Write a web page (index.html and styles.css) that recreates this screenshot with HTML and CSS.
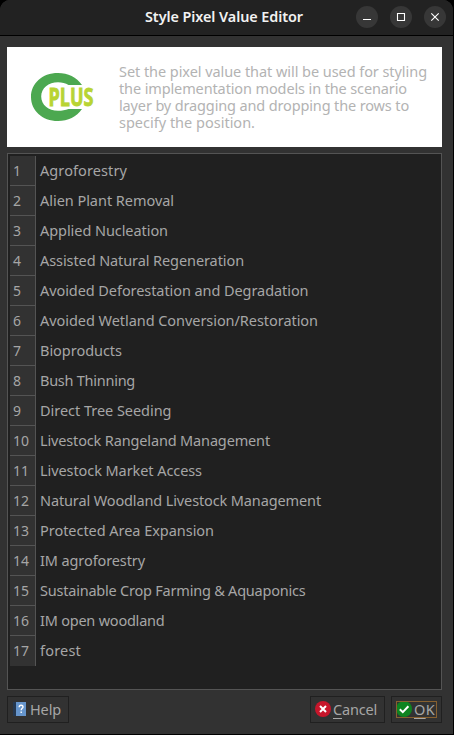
FILE: index.html
```
<!DOCTYPE html>
<html lang="en">
<head>
<meta charset="utf-8">
<title>Style Pixel Value Editor</title>
<link rel="stylesheet" href="styles.css">
</head>
<body>
<div class="window">
  <header class="titlebar">
    <h1 data-width="158">Style Pixel Value Editor</h1>
    <div class="controls">
      <button aria-label="Minimize"><svg width="22" height="22"><path d="M7 13.5h8"/></svg></button>
      <button aria-label="Maximize"><svg width="22" height="22"><path d="M7.5 7.5h7v7h-7z"/></svg></button>
      <button aria-label="Close"><svg width="22" height="22"><path d="M7.300 7.300l7.400 7.400M14.700 7.300l-7.400 7.400"/></svg></button>
    </div>
  </header>
  <main>
    <section class="banner">
      <svg class="logo" width="66" height="50" viewBox="0 0 66 50" role="img" aria-label="CPLUS">
        <path fill="#4ca850" d="M52 13C46.500 5 38 1 28 1 12 1 1 11.500 1 25s11 24 27 24c10 0 18.500-4 24-12H38.500C35.500 38.200 32 38.800 28 38.800 18.500 38.800 11.200 33 11.200 24.500S18.500 10.200 28 10.200c4 0 7.500 1 10.500 2.800z"/>
        <text x="18.500" y="33.500" textLength="45" lengthAdjust="spacingAndGlyphs">PLUS</text>
      </svg>
      <p>
        <span data-width="308">Set the pixel value that will be used for styling</span>
        <span data-width="288">the implementation models in the scenario</span>
        <span data-width="290">layer by dragging and dropping the rows to</span>
        <span data-width="136">specify the position.</span>
      </p>
    </section>
    <ol class="list">
      <li><b>1</b><span data-width="87">Agroforestry</span></li>
      <li><b>2</b><span data-width="134">Alien Plant Removal</span></li>
      <li><b>3</b><span data-width="128">Applied Nucleation</span></li>
      <li><b>4</b><span data-width="204">Assisted Natural Regeneration</span></li>
      <li><b>5</b><span data-width="268.500">Avoided Deforestation and Degradation</span></li>
      <li><b>6</b><span data-width="278">Avoided Wetland Conversion/Restoration</span></li>
      <li><b>7</b><span data-width="82">Bioproducts</span></li>
      <li><b>8</b><span data-width="95">Bush Thinning</span></li>
      <li><b>9</b><span data-width="131.500">Direct Tree Seeding</span></li>
      <li><b>10</b><span data-width="230">Livestock Rangeland Management</span></li>
      <li><b>11</b><span data-width="162">Livestock Market Access</span></li>
      <li><b>12</b><span data-width="281">Natural Woodland Livestock Management</span></li>
      <li><b>13</b><span data-width="174">Protected Area Expansion</span></li>
      <li><b>14</b><span data-width="105">IM agroforestry</span></li>
      <li><b>15</b><span data-width="265.500">Sustainable Crop Farming &amp; Aquaponics</span></li>
      <li><b>16</b><span data-width="124.500">IM open woodland</span></li>
      <li><b>17</b><span data-width="41">forest</span></li>
    </ol>
    <footer>
      <button class="btn help">
        <svg width="13" height="14"><path fill="#26384f" d="M0 0h4v14H0z"/><path fill="#6695cc" d="M3 0h10v14H3z"/><path fill="none" stroke="#fff" stroke-width="1.400" d="M6.200 5.200c0-2.600 3.800-2.500 3.800-.3 0 1.400-1.800 1.500-1.800 3.300M8.200 9.400v1.500"/></svg>
        <span data-width="31">Help</span>
      </button>
      <button class="btn cancel">
        <svg width="16" height="16"><circle cx="8" cy="8" r="8" fill="#c7162b"/><path fill="none" stroke="#fff" stroke-width="2" d="M5 5l6 6M11 5l-6 6"/></svg>
        <span data-width="44"><u>C</u>ancel</span>
      </button>
      <button class="btn ok">
        <i><svg width="16" height="16"><circle cx="8" cy="8" r="8" fill="#0e8420"/><path fill="none" stroke="#fff" stroke-width="2" d="M3.800 8.200l3 2.900 5.600-5.800"/></svg>
        <span data-width="21"><u>O</u>K</span></i>
      </button>
    </footer>
  </main>
</div>
<script src="fit.js"></script>
</body>
</html>
```
FILE: styles.css
```
* { box-sizing: border-box; }
body {
  margin: 0;
  background: #000;
  font: 14.5px/17px "Noto Sans", "Open Sans", sans-serif;
  color: #a6a6a6;
}
.window {
  width: 453px;
  height: 734px;
  background: #323232;
  border-radius: 10px 10px 0 0;
  overflow: hidden;
}
.titlebar {
  height: 36px;
  background: #222;
  border-bottom: 1px solid #000;
  display: grid;
  grid-template-columns: 145px 1fr auto;
  align-items: center;
  padding-right: 7px;
}
h1 {
  grid-column: 2;
  margin: 0;
  padding-bottom: 2px;
  justify-self: start;
  font-size: 14.4px;
  line-height: 20px;
  font-weight: 600;
  color: #f2f2f2;
}
.controls { display: flex; gap: 12px; padding-bottom: 1px; }
.controls button {
  width: 22px;
  height: 22px;
  padding: 0;
  border: 0;
  border-radius: 50%;
  background: #373737;
}
.controls svg { display: block; fill: none; stroke: #fff; stroke-width: 1.1; }
main { padding: 11px 11px 0 7px; }
.banner {
  height: 100px;
  background: #fff;
  display: flex;
  align-items: flex-start;
}
.logo { margin: 25px 22px 0 23px; flex: none; overflow: visible; }
.logo text {
  font: 700 24.5px "Open Sans", sans-serif;
  fill: #b8d433;
  stroke: #b8d433;
  stroke-width: 0.9px;
}
.banner p { margin: 16px 0 0 1px; color: #b3b3b3; }
.banner p span { display: block; width: max-content; }
span, h1 { white-space: nowrap; }
.list {
  list-style: none;
  margin: 6px 0 0;
  height: 537px;
  border: 1px solid #545454;
  background: #202020;
  padding: 2px;
}
.list li { height: 30px; display: flex; line-height: 29px; }
.list b {
  width: 26px;
  border: solid #545454;
  border-width: 0 1px 1px 0;
  background: #323232;
  padding-left: 3px;
  margin-right: 4px;
  font-weight: 400;
  font-size: 14px;
  line-height: 29px;
}
.list li:last-child b { border-bottom: 0; }
footer { display: flex; margin-top: 6px; }
.btn {
  height: 27px;
  background: #323232;
  border: 1px solid #202020;
  padding: 0;
  display: flex;
  align-items: center;
  font: inherit;
  color: #a6a6a6;
}
.btn svg { flex: none; }
.help { width: 62px; padding-left: 5px; gap: 4px; }
.help svg { margin-bottom: 2px; }
.cancel { width: 75px; margin-left: auto; padding-left: 4px; gap: 2px; }
.cancel svg { margin-bottom: 1px; }
.ok { width: 51px; margin-left: 6px; padding-left: 4px; }
.ok i {
  display: flex;
  align-items: center;
  gap: 2px;
  width: 41px;
  height: 17px;
  outline: 1px solid #87602f;
  outline-offset: -1px;
  font-style: normal;
}
.ok svg { margin: 0 0 1px; }
u { text-decoration-thickness: 1px; text-underline-offset: 3px; }
```
FILE: fit.js
```
// Tune the letter spacing so that each label fills its set width.
document.querySelectorAll('[data-width]').forEach(function (el) {
  var width = el.getBoundingClientRect().width;
  var gap = (Number(el.dataset.width) - width) / el.textContent.length;
  el.style.letterSpacing = gap.toFixed(3) + 'px';
});
```
